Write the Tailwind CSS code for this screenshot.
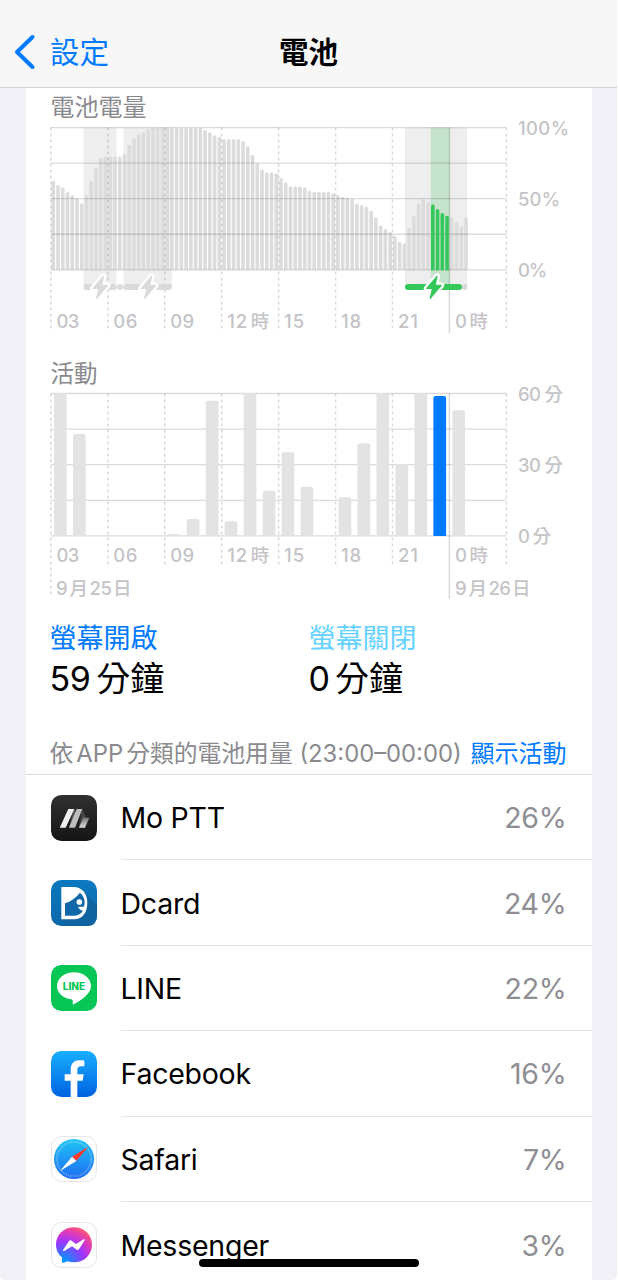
<!DOCTYPE html>
<html lang="zh-Hant">
<head>
<meta charset="utf-8">
<meta name="viewport" content="width=device-width, initial-scale=1">
<title>電池</title>
<script src="https://cdn.jsdelivr.net/npm/@tailwindcss/browser@4"></script>
</head>
<body class="bg-white">
<div class="relative flex h-[1280px] w-[617px] flex-col overflow-hidden rounded-b-[5px] bg-[#f2f1f7] font-['Inter','Noto_Sans_CJK_TC',sans-serif] text-black">
  <header class="grid h-[88px] shrink-0 grid-cols-3 items-end border-b border-[#d3d3d6] bg-[#f7f7f8] pb-[13px]">
    <a class="flex items-center gap-[14px] pl-[14px] text-[29.5px] leading-[44px] text-[#007aff]">
      <svg class="h-[36px] w-[22px]" viewBox="0 0 22 36" fill="none" stroke="#007aff" stroke-width="4" stroke-linecap="round" stroke-linejoin="round"><path d="M18.5 3 L3 18 L18.5 33"/></svg>
      <span class="whitespace-nowrap">設定</span>
    </a>
    <h1 class="text-center text-[29.5px] font-bold leading-[44px]">電池</h1>
  </header>

  <main class="mx-auto flex w-[566px] flex-1 flex-col bg-white">
    <h2 class="mt-[3px] pl-[25px] text-[24px] leading-[34px] text-[#8a8a8e]">電池電量</h2>
    <svg id="level" class="h-[225px] w-[566px] shrink-0 overflow-visible" viewBox="26 125 566 225"></svg>
    <h2 class="mt-[7px] pl-[25px] text-[23.5px] leading-[34px] text-[#8a8a8e]">活動</h2>
    <svg id="activity" class="h-[219px] w-[566px] shrink-0 overflow-visible" viewBox="26 391 566 219"></svg>

    <section class="mt-[10px] grid grid-cols-[259px_1fr] pl-[24px]">
      <div>
        <p class="text-[27px] leading-[38px] text-[#007aff]">螢幕開啟</p>
        <p class="text-[34px] leading-[42px]"><span class="tracking-[-0.5px]">59</span><span class="ml-[6px]">分鐘</span></p>
      </div>
      <div>
        <p class="text-[27px] leading-[38px] text-[#64d2ff]">螢幕關閉</p>
        <p class="text-[34px] leading-[42px]">0<span class="ml-[5px]">分鐘</span></p>
      </div>
    </section>

    <div class="mt-[37px] flex h-[38px] items-center justify-between border-b border-[#dcdcde] pr-[25px] pb-[4px] pl-[24px] whitespace-nowrap">
      <p class="text-[23.8px] text-[#8a8a8e]">依<span class="mx-[3px]">APP</span>分類的電池用量 (23:00–00:00)</p>
      <a class="text-[24px] text-[#007aff]">顯示活動</a>
    </div>

    <ul class="flex flex-col text-[28.5px] tracking-[-0.25px]">
      <li class="flex h-[85.4px] items-center pl-[25px]">
        <svg class="h-[46px] w-[46px]" viewBox="0 0 138 138">
          <defs><linearGradient id="mo" x1="0" y1="0" x2="0" y2="1"><stop offset="0" stop-color="#303030"/><stop offset="1" stop-color="#151515"/></linearGradient>
          <linearGradient id="mo2" x1="0" y1="0" x2="0" y2="1"><stop offset="0" stop-color="#777"/><stop offset="1" stop-color="#ddd"/></linearGradient></defs>
          <rect width="138" height="138" rx="31" fill="url(#mo)"/>
          <path d="M68 42 L77 55 L72 80 L55 97 Z" fill="#555"/>
          <path d="M93 42 L104 62 L100 80 L84 97 Z" fill="#444"/>
          <path d="M52 42 H70 L44 98 H26 Z" fill="#efefef"/>
          <path d="M77 42 H94 L72 98 H54 Z" fill="#bdbdbd"/>
          <path d="M97 68 H115 L102 98 H84 Z" fill="url(#mo2)"/>
        </svg>
        <div class="ml-[24px] flex h-full flex-1 items-center justify-between border-b border-[#e3e3e5] pt-[3px] pr-[25px]"><span>Mo PTT</span><span class="text-[#8e8e93]">26%</span></div>
      </li>
      <li class="flex h-[85.4px] items-center pl-[25px]">
        <svg class="h-[46px] w-[46px]" viewBox="0 0 138 138">
          <defs><linearGradient id="dc" x1="0" y1="0" x2="0" y2="1"><stop offset="0" stop-color="#0b79c0"/><stop offset="1" stop-color="#0b67a6"/></linearGradient></defs>
          <rect width="138" height="138" rx="31" fill="url(#dc)"/>
          <path d="M98 35 L138 75 V107 Q138 138 107 138 H54 L33 117 Z" fill="#0f639f"/>
          <path d="M31 21 H68 C94 21 109 42 109 68 C109 98 94 118 68 118 H31 Z" fill="#fff"/>
          <path d="M42 70 Q68 62 87 38 Q101 50 101 68 L99 80 Q90 80 81 80 Q85 90 96 92 Q86 107 68 107 H42 Z" fill="#1068a8"/>
          <circle cx="85" cy="66" r="8.500" fill="#fff"/>
        </svg>
        <div class="ml-[24px] flex h-full flex-1 items-center justify-between border-b border-[#e3e3e5] pt-[3px] pr-[25px]"><span>Dcard</span><span class="text-[#8e8e93]">24%</span></div>
      </li>
      <li class="flex h-[85.4px] items-center pl-[25px]">
        <svg class="h-[46px] w-[46px]" viewBox="0 0 138 138">
          <rect width="138" height="138" rx="31" fill="#06c755"/>
          <path d="M69 22 C41 22 18 40 18 63 C18 84 37 100 60 103 C66 104 66 107 65 115 C65 119 67 119 70 117 C84 109 120 89 120 63 C120 40 97 22 69 22 Z" fill="#fff"/>
          <text x="35.500" y="74.500" font-family="Inter" font-size="29" font-weight="800" letter-spacing="0" textLength="67" lengthAdjust="spacingAndGlyphs" fill="#06c755">LINE</text>
        </svg>
        <div class="ml-[24px] flex h-full flex-1 items-center justify-between border-b border-[#e3e3e5] pt-[3px] pr-[25px]"><span>LINE</span><span class="text-[#8e8e93]">22%</span></div>
      </li>
      <li class="flex h-[85.4px] items-center pl-[25px]">
        <svg class="h-[46px] w-[46px]" viewBox="0 0 138 138">
          <defs><linearGradient id="fb" x1="0" y1="0" x2="0" y2="1"><stop offset="0" stop-color="#19afff"/><stop offset="1" stop-color="#0062e0"/></linearGradient></defs>
          <rect width="138" height="138" rx="31" fill="url(#fb)"/>
          <path d="M59 138 V89 H41 V70 H59 V59 C59 37 69 28 86 28 C92 28 97 28 100 29 V46 H90 C82 46 79 50 79 58 V70 H98 L95 89 H79 V138 Z" fill="#fff"/>
        </svg>
        <div class="ml-[24px] flex h-full flex-1 items-center justify-between border-b border-[#e3e3e5] pt-[3px] pr-[25px]"><span>Facebook</span><span class="text-[#8e8e93]">16%</span></div>
      </li>
      <li class="flex h-[85.4px] items-center pl-[25px]">
        <svg class="h-[46px] w-[46px]" viewBox="0 0 138 138">
          <defs><linearGradient id="sf" x1="0" y1="0" x2="0" y2="1"><stop offset="0" stop-color="#1fc4f6"/><stop offset="1" stop-color="#1e6cf0"/></linearGradient></defs>
          <rect x="1.500" y="1.500" width="135" height="135" rx="30" fill="#fff" stroke="#e6e6e8" stroke-width="3"/>
          <circle cx="69" cy="69" r="60" fill="url(#sf)"/>
          <circle cx="69" cy="69" r="51.500" fill="none" stroke="#fff" stroke-opacity=".5" stroke-width="7" stroke-dasharray="1.700 3.694"/>
          <path d="M112 32 L63 62 L76 75 Z" fill="#ff3b30"/>
          <path d="M27 105 L63 62 L76 75 Z" fill="#fff"/>
        </svg>
        <div class="ml-[24px] flex h-full flex-1 items-center justify-between border-b border-[#e3e3e5] pt-[3px] pr-[25px]"><span>Safari</span><span class="text-[#8e8e93]">7%</span></div>
      </li>
      <li class="flex h-[85.4px] items-center pl-[25px]">
        <svg class="h-[46px] w-[46px]" viewBox="0 0 138 138">
          <defs><radialGradient id="ms" cx=".2" cy="1" r="1.100"><stop offset="0" stop-color="#0099ff"/><stop offset=".1" stop-color="#0a8fff"/><stop offset=".55" stop-color="#a033ff"/><stop offset=".8" stop-color="#e03ab8"/><stop offset="1" stop-color="#ff5a70"/></radialGradient></defs>
          <rect x="1.500" y="1.500" width="135" height="135" rx="30" fill="#fff" stroke="#e6e6e8" stroke-width="3"/>
          <path d="M69 16 C38 16 15 39 15 68 C15 84 22 97 33 106 V119 Q33 124 38 122 L50 118 C56 120 62 121 69 121 C100 121 123 97 123 68 C123 39 100 16 69 16 Z" fill="url(#ms)"/>
          <path d="M36 84 L54 57 Q58 53 63 57 L75 66 L98 52 Q103 51 101 55 L84 82 Q80 86 75 82 L63 73 L40 87 Q35 88 36 84 Z" fill="#fff"/>
        </svg>
        <div class="ml-[24px] flex h-full flex-1 items-center justify-between pt-[3px] pr-[25px]"><span>Messenger</span><span class="text-[#8e8e93]">3%</span></div>
      </li>
    </ul>
  </main>
  <div class="absolute top-[1259px] left-[199px] h-[8px] w-[220px] rounded-full bg-black"></div>
</div>

<script>
const NS = 'http://www.w3.org/2000/svg';
function add(svg, tag, attrs, text) {
  const e = document.createElementNS(NS, tag);
  for (const k in attrs) e.setAttribute(k, attrs[k]);
  if (text) e.textContent = text;
  svg.appendChild(e);
  return e;
}
const X0 = 50.9, STEP = 56.93, X1 = 506.4;
const label = (svg, x, y, s, w) => add(svg, 'text', {x, y, fill: '#c4c4c7', 'font-size': 18.5, 'font-weight': 500, textLength: w}, s);
function grid(svg, top, bottom, dashEnd, solidEnd, firstEnd) {
  for (let i = 0; i < 5; i++) {
    const y = top + (bottom - top) * i / 4;
    add(svg, 'line', {x1: X0, x2: X1, y1: y, y2: y, stroke: '#000', 'stroke-opacity': .14, 'stroke-width': 1.3});
  }
  for (let i = 0; i < 9; i++) {
    const x = X0 + STEP * i;
    const a = {x1: x, x2: x, y1: top, y2: i === 7 ? solidEnd : i === 0 ? firstEnd : dashEnd, stroke: '#000', 'stroke-opacity': .15, 'stroke-width': 1.5};
    if (i !== 7) a['stroke-dasharray'] = '3 3';
    add(svg, 'line', a);
  }
}
function hours(svg, y) {
  [['03', 23], ['06', 24], ['09', 24], ['12', 20], ['15', 20], ['18', 20], ['21', 20], ['0', 11]].forEach(([s, w], i) => {
    const x = X0 + STEP * i + 5.5;
    label(svg, x, y, s, w);
    if (i === 3) label(svg, x + 23.5, y, '時', 18);
    if (i === 7) label(svg, x + 14.5, y, '時', 18);
  });
}

const level = document.getElementById('level');
const T = 127.6, B = 269.8;
[[83.6, 33], [123.4, 48.4], [405, 62]].forEach(([x, w]) => add(level, 'rect', {x, y: T, width: w, height: 162, fill: '#eeeeee'}));
add(level, 'rect', {x: 430.6, y: T, width: 19, height: 162, fill: '#c6e4cd'});
const tops = [197,210,217,231,240,249,265,240,197,158,129,124,124,124,124,117,89,68,57,51,43,38,38,38,38,38,38,38,38,38,38,38,44,52,61,65,72,72,72,72,77,94,120,145,163,172,172,175,189,202,214,214,214,217,227,230,230,230,230,235,240,245,248,252,265,270,275,287,307,331,342,350,363,380,385,338,303,265,252,260,268,282,294,302,307,320,332,307];
tops.forEach((t, i) => {
  const x = 51.5 + i * 4.744, y = 115 + t / 3;
  add(level, 'path', {d: `M${x} ${B} V${y + 1.8} q0 -1.8 1.8 -1.8 q1.8 0 1.8 1.8 V${B} Z`, fill: '#dcdcdc'});
});
grid(level, T, B, 330, 333, 330);
for (let i = 80; i < 84; i++) {
  const x = 51.5 + i * 4.744, y = 115 + tops[i] / 3;
  add(level, 'path', {d: `M${x} ${B + .5} V${y + 1.8} q0 -1.8 1.8 -1.8 q1.8 0 1.8 1.8 V${B + .5} Z`, fill: '#34c759'});
}
const pill = (x, w, fill) => add(level, 'rect', {x, y: 284, width: w, height: 6, rx: 3, fill});
pill(83.6, 33, '#dadada'); pill(117, 6, '#dadada'); pill(123.4, 48.4, '#dadada');
pill(462, 5.4, '#dadada'); pill(405, 57, '#34c759');
[[100.2, '#dadada'], [148.3, '#dadada'], [433.8, '#34c759']].forEach(([x, fill]) => {
  const d = `M${x + 3.2} 276.300 L${x - 7} 288.400 H${x - 1.200} L${x - 3.600} 298.300 L${x + 7.400} 285.400 H${x + 1.200} Z`;
  add(level, 'path', {d, fill: '#fff', stroke: '#fff', 'stroke-width': 6, 'stroke-linejoin': 'round'});
  add(level, 'path', {d, fill, stroke: fill, 'stroke-width': 1.3, 'stroke-linejoin': 'round'});
});
hours(level, 328);
label(level, 518, 134.500, '100%', 51);
label(level, 518, 205.500, '50%', 42);
label(level, 518, 277, '0%', 29);

const act = document.getElementById('activity');
const T2 = 393.5, B2 = 535.9;
grid(act, T2, B2, 565, 599, 597);
const use = [115,237,0,0,0,0,537,492,137,499,115,407,292,395,0,427,265,115,328,115,123,166];
use.forEach((t, i) => {
  if (!t) return;
  const x = 54 + i * 18.97, y = 355 + t / 3, r = Math.min(2, B2 - y);
  add(act, 'path', {d: `M${x} ${B2} V${y + r} q0 ${-r} ${r} ${-r} h${12.7 - 2 * r} q${r} 0 ${r} ${r} V${B2} Z`, fill: i === 20 ? '#007aff' : '#e3e3e3'});
});
hours(act, 562);
[[56, '9', '月', '25', '日'], [455, '9', '月', '26', '日']].forEach(([x, a, b, c, d]) => {
  label(act, x, 594.500, a, 11); label(act, x + 13.500, 594.500, b, 18);
  label(act, x + 33.500, 594.500, c, 22.500); label(act, x + 57, 594.500, d, 18);
});
[['60', 400.500, 23], ['30', 471.500, 23], ['0', 542.500, 11]].forEach(([s, y, w]) => {
  label(act, 518, y, s, w); label(act, 518 + w + 3.500, y, '分', 18);
});
</script>
</body>
</html>
